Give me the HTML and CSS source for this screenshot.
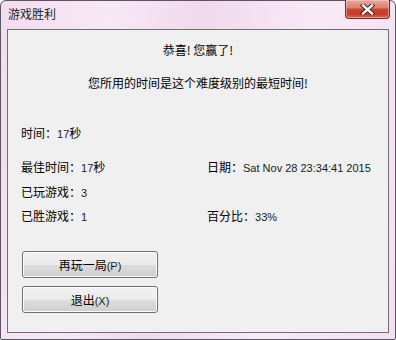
FILE: index.html
```html
<!DOCTYPE html>
<html lang="zh-cn">
<head>
    <meta charset="UTF-8">
    <title>游戏胜利</title>
    <link rel="stylesheet" href="styles.css">
</head>
<body>

    <div class="window">
        <div class="titlebar">
            <span class="title">游戏胜利</span>
            <button class="close" aria-label="关闭">
                <svg width="17" height="11" viewBox="0 0 17 11">
                    <path d="M4 1.5 L13 9.5 M13 1.5 L4 9.5" stroke="#3a1a16" stroke-width="4.2" stroke-linecap="square"/>
                    <path d="M4 1.5 L13 9.5 M13 1.5 L4 9.5" stroke="#ffffff" stroke-width="2.4" stroke-linecap="square"/>
                </svg>
            </button>
        </div>

        <div class="client">
            <p class="congrats">恭喜! 您赢了!</p>
            <p class="record">您所用的时间是这个难度级别的最短时间!</p>

            <p class="line time">时间：<span class="num">17</span>秒</p>

            <div class="stats">
                <p class="line">最佳时间：<span class="num">17</span>秒</p>
                <p class="line">日期：<span class="num">Sat Nov 28 23:34:41 2015</span></p>
                <p class="line">已玩游戏：<span class="num">3</span></p>
                <p class="line"></p>
                <p class="line">已胜游戏：<span class="num">1</span></p>
                <p class="line">百分比：<span class="num">33%</span></p>
            </div>

            <div class="actions">
                <button class="btn">再玩一局<span class="num">(P)</span></button>
                <button class="btn">退出<span class="num">(X)</span></button>
            </div>
        </div>
    </div>

</body>
</html>
```

FILE: styles.css
```css
body {
    margin: 0;
    font-family: "Noto Sans CJK SC", sans-serif;
    font-size: 12px;
    color: #000;
}
.window {
    box-sizing: border-box;
    width: 396px;
    height: 340px;
    border: 1px solid #5a5560;
    border-radius: 6px 6px 2px 2px;
    background: linear-gradient(100deg, #f3dcef 0%, #f8e8f6 25%, #f1d9ee 45%, #f9e9f7 70%, #f4dff2 100%);
    padding: 0 6px 7px 6px;
}
.titlebar {
    height: 28px;
    display: flex;
    align-items: flex-start;
    justify-content: space-between;
}
.title {
    margin: 4px 0 0 1px;
    color: #222;
    line-height: 18px;
}
.close {
    width: 45px;
    height: 19px;
    margin: -1px -1px 0 0;
    padding: 0;
    border: 1px solid #6e2e26;
    border-top: none;
    border-radius: 0 0 4px 4px;
    background: linear-gradient(#e9a99f 0%, #dc7e6f 45%, #c8412f 50%, #c5402c 80%, #d96a4f 100%);
    box-shadow: inset 0 0 0 1px rgba(255, 210, 200, 0.5);
    display: flex;
    align-items: center;
    justify-content: center;
}
.client {
    box-sizing: border-box;
    height: 304px;
    background: #f0f0f0;
    border: 1px solid #6f6f6f;
    padding: 0 13px;
}
p {
    margin: 0;
    line-height: 20px;
}
.num {
    font-family: "Liberation Sans", sans-serif;
    font-size: 11px;
    color: #1a1a22;
}
.congrats {
    text-align: center;
    margin-top: 10px;
}
.record {
    text-align: center;
    margin-top: 13px;
}
.time {
    margin-top: 30px;
}
.stats {
    display: grid;
    grid-template-columns: 186px 1fr;
    grid-template-rows: 25px 24px 24px;
    align-items: center;
    margin-top: 11px;
}
.actions {
    display: flex;
    flex-direction: column;
    gap: 8px;
    margin-top: 23px;
    padding-left: 1px;
}
.btn {
    width: 136px;
    height: 27px;
    padding: 0;
    border: 1px solid #707070;
    border-radius: 3px;
    background: linear-gradient(#f2f2f2 0%, #ebebeb 50%, #dddddd 51%, #cfcfcf 100%);
    box-shadow: inset 0 0 0 1px #fcfcfc;
    font-family: "Noto Sans CJK SC", sans-serif;
    font-size: 12px;
    color: #000;
}
```
